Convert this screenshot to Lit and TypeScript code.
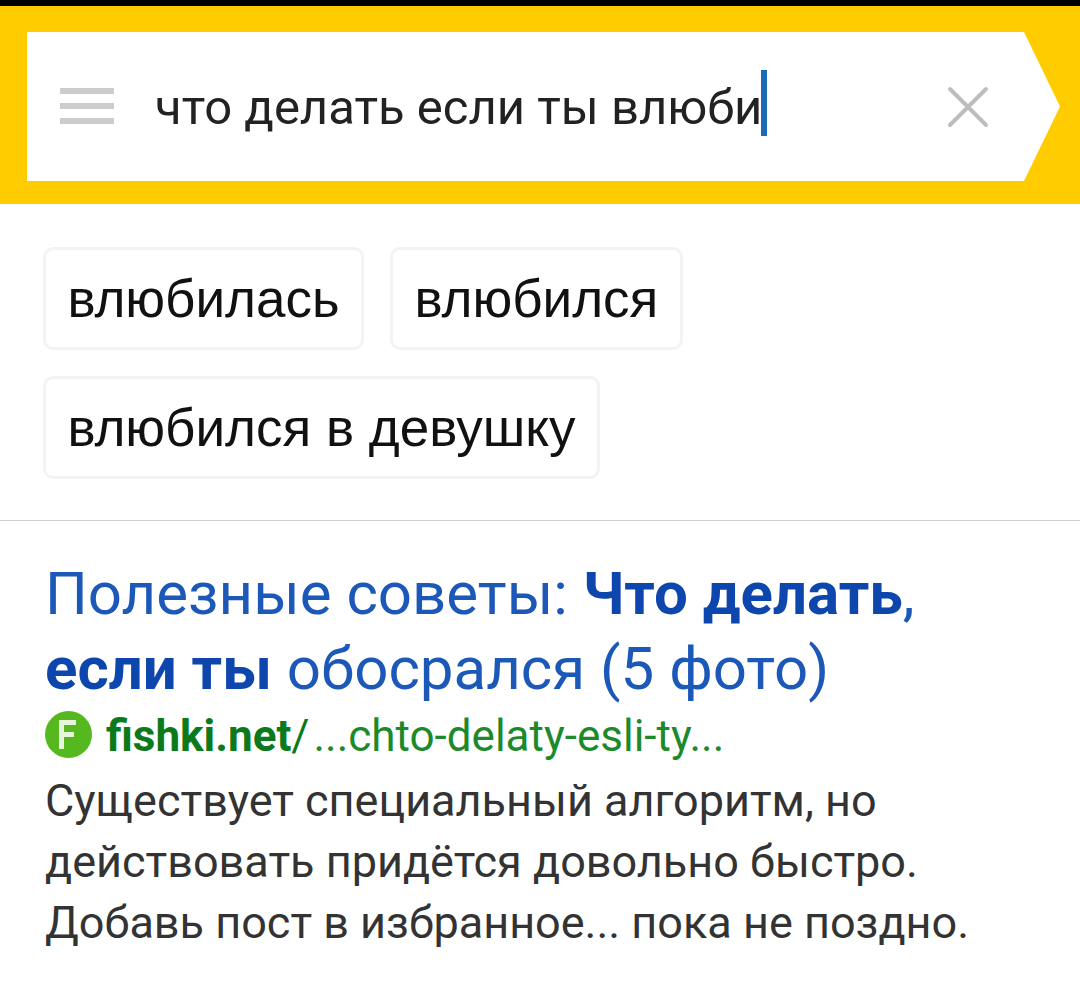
import { LitElement, html, css } from "lit";
import { customElement } from "lit/decorators.js";

const chips = [["влюбилась", "влюбился"], ["влюбился в девушку"]];

@customElement("app-root")
class AppRoot extends LitElement {
  static styles = css`
    :host {
      display: block;
      width: 1080px;
      height: 996px;
      background: #fff;
      font-family: Roboto, "Liberation Sans", sans-serif;
      overflow: hidden;
    }

    .header {
      border-top: 6px solid #000;
      background: #fc0;
      padding: 26px 20px 23px 27px;
    }

    .search {
      height: 149px;
      background: #fff;
      display: flex;
      align-items: center;
      padding-left: 33px;
      clip-path: polygon(0 0, 997px 0, 100% 50%, 997px 100%, 0 100%);
    }

    .menu {
      width: 54px;
      height: 36px;
      flex: none;
      margin-top: -1px;
      display: flex;
      flex-direction: column;
      justify-content: space-between;
    }

    .menu i {
      display: block;
      height: 6px;
      background: #ccc;
    }

    .query {
      margin-left: 41px;
      margin-top: 2px;
      font-size: 49px;
      line-height: 66px;
      color: #222;
      white-space: nowrap;
      display: flex;
      align-items: center;
      width: 791px;
    }

    .caret {
      width: 6px;
      height: 66px;
      background: #1a6ab5;
      margin-left: -1px;
      margin-bottom: 10px;
    }

    .clear {
      width: 44px;
      height: 44px;
      flex: none;
      margin-top: 1px;
    }

    .chips {
      padding: 43px 43px 41px;
      display: flex;
      flex-direction: column;
      gap: 26px;
      border-bottom: 1px solid #d0d0d0;
    }

    .row {
      display: flex;
      gap: 26px;
    }

    .chip {
      height: 103px;
      box-sizing: border-box;
      border: 3px solid #f3f3f3;
      border-radius: 10px;
      padding: 0 21.5px;
      display: flex;
      align-items: center;
      font-size: 53px;
      font-family: "Liberation Sans", Arial, sans-serif;
      color: #111;
    }

    .result {
      padding: 35px 45px;
    }

    .title {
      font-size: 60px;
      line-height: 75px;
      color: #1c58b8;
    }

    .title b {
      font-weight: 700;
      color: #0d47ad;
    }

    .url {
      display: flex;
      align-items: center;
      height: 48px;
      margin-top: 4px;
      color: #1c8a2a;
      font-size: 44px;
      white-space: nowrap;
    }

    .favicon {
      width: 47px;
      height: 47px;
      margin-right: 14px;
      flex: none;
    }

    .path {
      margin-top: 4px;
    }

    .url b,
    .slash {
      font-weight: 700;
      color: #0a7a1a;
    }

    .slash {
      font-weight: 400;
      margin-right: 4px;
    }

    .snippet {
      font-size: 45px;
      line-height: 61px;
      color: #333;
      margin-top: 12px;
    }
  `;

  render() {
    return html`
      <div class="header">
        <div class="search">
          <div class="menu"><i></i><i></i><i></i></div>
          <div class="query">что делать если ты влюби<div class="caret"></div></div>
          <svg class="clear" viewBox="0 0 44 44" fill="none" stroke="#bdbdbd" stroke-width="4" stroke-linecap="round">
            <path d="M4 4 40 40M40 4 4 40" />
          </svg>
        </div>
      </div>
      <div class="chips">
        ${chips.map(
          (row) => html`<div class="row">
            ${row.map((c) => html`<div class="chip">${c}</div>`)}
          </div>`
        )}
      </div>
      <div class="result">
        <div class="title">
          Полезные советы: <b>Что делать</b>,<br /><b>если ты</b> обосрался (5 фото)
        </div>
        <div class="url">
          <svg class="favicon" viewBox="0 0 47 47">
            <circle cx="23.5" cy="23.5" r="23.5" fill="#55b81f" />
            <path d="M14 9H31V14H19V21H29V26H19V38H14Z" fill="#e6f5dc" />
          </svg>
          <div class="path"><b>fishki.net</b><span class="slash">/</span><span>...chto-delaty-esli-ty...</span></div>
        </div>
        <div class="snippet">
          Существует специальный алгоритм, но<br />
          действовать придётся довольно быстро.<br />
          Добавь пост в избранное... пока не поздно.
        </div>
      </div>
    `;
  }
}
